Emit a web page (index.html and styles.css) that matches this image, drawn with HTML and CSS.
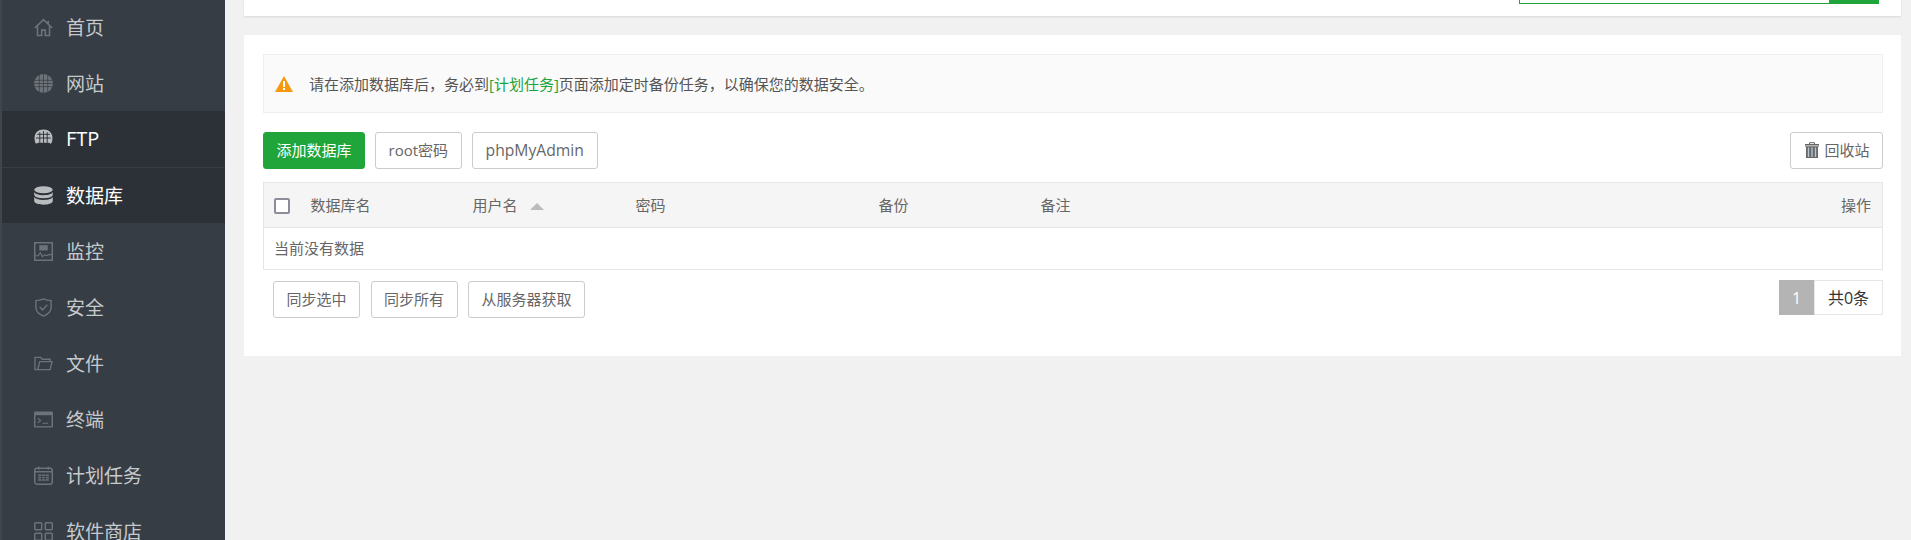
FILE: index.html
```html
<!DOCTYPE html>
<html lang="zh-CN">
<head>
    <meta charset="UTF-8">
    <title>数据库管理</title>
    <link rel="stylesheet" href="styles.css">
</head>
<body>
    <!-- 侧边栏 -->
    <aside class="sidebar">
        <ul class="menu">
            <li class="menu-item">
                <svg class="menu-icon" viewBox="0 0 18 18"><path d="M.8 9.500 9 1.500l8.200 8M13.500 2.500v3M3.300 7.500V16.500h4v-5h3.400v5h4V7.500" fill="none" stroke="currentColor" stroke-width="1.500"/></svg>
                <span>首页</span>
            </li>
            <li class="menu-item">
                <svg class="menu-icon" viewBox="0 0 18 18"><circle cx="9" cy="9" r="9" fill="currentColor"/><path d="M0 6h18M0 9h18M0 12h18M5 0v18M9 0v18M13 0v18" stroke="#363d44" stroke-width=".7"/></svg>
                <span>网站</span>
            </li>
            <li class="menu-item active">
                <svg class="menu-icon icon-ftp" viewBox="0 0 18 18"><path d="M9 1.500c5 0 8.500 3 8.500 8 0 2.500-.5 4.500-1.500 5.500l-2-1H4l-2 1C1 14 .5 12 .5 9.500c0-5 3.500-8 8.500-8z" fill="currentColor"/><path d="M3 6h12M2 9.500h14M5.500 4v10M9 3v11M12.500 4v10" stroke="#2c3138" stroke-width=".9"/></svg>
                <span class="latin">FTP</span>
            </li>
            <li class="menu-item active">
                <svg class="menu-icon" viewBox="0 0 18 18"><ellipse cx="9" cy="3.500" rx="8.800" ry="3.300" fill="currentColor"/><path d="M.2 5.700c1 2 3.800 3 8.800 3s7.800-1 8.800-3v2.800c-1 2-3.800 3-8.800 3s-7.800-1-8.800-3zM.2 10.200c1 2 3.800 3 8.800 3s7.800-1 8.800-3v4.300c-.7 2-3.800 3.200-8.800 3.200S.9 16.500.2 14.500z" fill="currentColor"/></svg>
                <span>数据库</span>
            </li>
            <li class="menu-item">
                <svg class="menu-icon" viewBox="0 0 18 18"><path d="M.7.700h16.600v16.600H.7z" fill="none" stroke="currentColor" stroke-width="1.400"/><path d="M5 3h8v5H5z" fill="currentColor"/><path d="M1 13h3l2-3 2 4 2-2 2 1 2-1h3" fill="none" stroke="currentColor" stroke-width="1.100"/></svg>
                <span>监控</span>
            </li>
            <li class="menu-item">
                <svg class="menu-icon" viewBox="0 0 18 20"><path d="M9 1c2.500 1.200 5 1.700 8 1.800V10c0 4-3 7-8 9-5-2-8-5-8-9V2.800C4 2.700 6.500 2.200 9 1z" fill="none" stroke="currentColor" stroke-width="1.500"/><path d="m5 9.500 3 3 5-5.500" fill="none" stroke="currentColor" stroke-width="1.500"/></svg>
                <span>安全</span>
            </li>
            <li class="menu-item">
                <svg class="menu-icon" viewBox="0 0 20 16"><path d="M4 14.500H1V1.500h6l1.500 2H17V6M4 14.500 6 6h13l-2 8.500z" fill="none" stroke="currentColor" stroke-width="1.400"/></svg>
                <span>文件</span>
            </li>
            <li class="menu-item">
                <svg class="menu-icon" viewBox="0 0 20 17"><rect width="20" height="17" rx="1.500" fill="currentColor"/><path d="M1.500 4h17v11.500h-17z" fill="#363d44"/><path d="m4 7 3 2.500L4 12M9 12.500h6" fill="none" stroke="currentColor" stroke-width="1.200"/></svg>
                <span>终端</span>
            </li>
            <li class="menu-item">
                <svg class="menu-icon" viewBox="0 0 18 18"><rect x=".7" y="2.200" width="16.600" height="15" rx="2" fill="none" stroke="currentColor" stroke-width="1.400"/><path d="M4.500.5v3M13.500.5v3M1 5.500h16" stroke="currentColor" stroke-width="1.300"/><path d="M4 8h10v6H4z" fill="currentColor"/><path d="M4 10h10M4 12h10M7.300 8v6M10.700 8v6" stroke="#363d44" stroke-width=".8"/></svg>
                <span>计划任务</span>
            </li>
            <li class="menu-item">
                <svg class="menu-icon" viewBox="0 0 18 18"><path d="M1.500.7h5a.8.8 0 0 1 .8.800v5a.8.8 0 0 1-.8.800h-5a.8.8 0 0 1-.8-.8v-5a.8.8 0 0 1 .8-.8zM11.500.7h5a.8.8 0 0 1 .8.800v5a.8.8 0 0 1-.8.800h-5a.8.8 0 0 1-.8-.8v-5a.8.8 0 0 1 .8-.8zM1.500 10.700h5a.8.8 0 0 1 .8.800v5a.8.8 0 0 1-.8.800h-5a.8.8 0 0 1-.8-.8v-5a.8.8 0 0 1 .8-.8zM11.500 10.700h5a.8.8 0 0 1 .8.800v5a.8.8 0 0 1-.8.800h-5a.8.8 0 0 1-.8-.8v-5a.8.8 0 0 1 .8-.8z" fill="none" stroke="currentColor" stroke-width="1.400"/></svg>
                <span>软件商店</span>
            </li>
        </ul>
    </aside>

    <main class="main">
        <!-- 顶部搜索条，只露出底边 -->
        <div class="top-card">
            <div class="search">
                <div class="search-input"></div>
                <div class="search-btn"></div>
            </div>
        </div>

        <section class="card">
            <div class="alert">
                <svg class="alert-icon" viewBox="0 0 18 16"><path d="M9 0 18 16H0z" fill="#f7980f"/><path d="M8 5h2v6H8zM8 12h2v2H8z" fill="#fff"/></svg>
                <span>请在添加数据库后，务必到<a class="link">[计划任务]</a>页面添加定时备份任务，以确保您的数据安全。</span>
            </div>

            <div class="toolbar">
                <button class="btn btn-green">添加数据库</button>
                <button class="btn">root密码</button>
                <button class="btn btn-latin">phpMyAdmin</button>
                <button class="btn btn-recycle">
                    <svg class="trash-icon" viewBox="0 0 14 16"><path d="M4.500 2V.7h5V2M0 2.500h14V4H0z" fill="none" stroke="#666" stroke-width="1"/><path d="M1 4.500h12V16H1z" fill="#666"/><path d="M3.500 5.500V15M7 5.500V15M10.500 5.500V15" stroke="#b8c4d0" stroke-width="1.400"/></svg>
                    回收站
                </button>
            </div>

            <table class="table">
                <colgroup>
                    <col class="col-check">
                    <col class="col-name">
                    <col class="col-user">
                    <col class="col-pass">
                    <col class="col-backup">
                    <col>
                    <col class="col-action">
                </colgroup>
                <thead>
                    <tr>
                        <th class="th-check"><span class="checkbox"></span></th>
                        <th>数据库名</th>
                        <th>用户名<span class="sort-up"></span></th>
                        <th>密码</th>
                        <th>备份</th>
                        <th>备注</th>
                        <th class="right">操作</th>
                    </tr>
                </thead>
                <tbody>
                    <tr>
                        <td colspan="7">当前没有数据</td>
                    </tr>
                </tbody>
            </table>

            <div class="table-foot">
                <div class="foot-btns">
                    <button class="btn">同步选中</button>
                    <button class="btn">同步所有</button>
                    <button class="btn">从服务器获取</button>
                </div>
                <div class="pager">
                    <span class="page-num">1</span>
                    <span class="page-total">共0条</span>
                </div>
            </div>
        </section>
    </main>
</body>
</html>
```

FILE: styles.css
```css
* {
    box-sizing: border-box;
}
body {
    margin: 0;
    height: 100vh;
    display: flex;
    overflow: hidden;
    background: #f1f1f1;
    font-family: "Open Sans", "Noto Sans CJK SC", sans-serif;
    font-size: 15px;
    color: #666;
}

/* 侧边栏 */
.sidebar {
    width: 225px;
    flex-shrink: 0;
    background: #363d44;
    border-left: 2px solid #42464a;
    overflow: hidden;
}
.menu {
    list-style: none;
    margin: -1px 0 0 -2px;
    padding: 0;
}
.menu-item {
    height: 56px;
    padding-left: 32px;
    display: flex;
    align-items: center;
    gap: 13px;
    border-left: 2px solid transparent;
    font-size: 19px;
    color: #c6cacd;
}
.menu-item span {
    padding-bottom: 1px;
}
.menu-item .latin {
    font-size: 20px;
}
.menu-item.active {
    background: #2c3138;
    border-left-color: #20a53a;
    color: #fff;
}
.menu-item.active + .menu-item.active {
    border-top: 1px solid #363d44;
}
.menu-icon {
    width: 19px;
    height: 19px;
    color: #6d7378;
}
.menu-icon.icon-ftp {
    margin-bottom: 4px;
}
.active .menu-icon {
    color: #b9bcbf;
}

/* 主区域 */
.main {
    flex: 1;
    min-width: 0;
    padding: 0 10px 0 19px;
}
.top-card {
    height: 16px;
    padding: 0 22px 12px 0;
    margin-bottom: 19px;
    display: flex;
    justify-content: flex-end;
    background: #fff;
    box-shadow: 0 1px 2px rgba(0,0,0,0.1);
}
.search {
    display: flex;
    width: 360px;
}
.search-input {
    flex: 1;
    border: 1px solid #20a53a;
    border-top: none;
}
.search-btn {
    width: 49px;
    background: #20a53a;
}
.card {
    height: 321px;
    padding: 19px 18px 0 19px;
    background: #fff;
}
.alert {
    height: 59px;
    padding-left: 11px;
    display: flex;
    align-items: center;
    gap: 16px;
    background: #fafafa;
    border: 1px solid #eee;
    font-size: 15px;
    color: #555;
}
.alert-icon {
    width: 18px;
    height: 16px;
}
.link {
    color: #20a53a;
}

/* 按钮 */
.toolbar {
    margin: 19px 0 13px;
    display: flex;
    gap: 10px;
}
.btn {
    height: 37px;
    padding: 0 12.500px 2px;
    background: #fff;
    border: 1px solid #ccc;
    border-radius: 3px;
    font: inherit;
    color: #666;
}
.btn-latin {
    padding: 0 13px 2px;
    font-size: 15.700px;
}
.btn-green {
    background: #20a53a;
    border-color: #20a53a;
    color: #fff;
}
.btn-recycle {
    margin-left: auto;
    padding-left: 14px;
    display: flex;
    align-items: center;
    gap: 5px;
}
.trash-icon {
    width: 14px;
    height: 16px;
}

/* 表格 */
.table {
    width: 100%;
    table-layout: fixed;
    border-collapse: collapse;
    border: 1px solid #e6e6e6;
    background: #fff;
}
.col-check {
    width: 36px;
}
.col-name {
    width: 162px;
}
.col-user {
    width: 163px;
}
.col-pass {
    width: 243px;
}
.col-backup {
    width: 162px;
}
.col-action {
    width: 120px;
}
.table th {
    height: 45px;
    padding: 0 11px 2px;
    background: #f5f5f5;
    border-bottom: 1px solid #e6e6e6;
    font-weight: normal;
    text-align: left;
}
.table th.th-check {
    padding: 2px 0 0 10px;
}
.table th.right {
    text-align: right;
}
.table td {
    height: 42px;
    padding: 0 10px 2px;
}
.checkbox {
    display: block;
    width: 16px;
    height: 16px;
    background: #fff;
    border: 2px solid #8e8b9a;
    border-radius: 2px;
}
.sort-up {
    display: inline-block;
    margin-left: 12px;
    vertical-align: middle;
    border-left: 7px solid transparent;
    border-right: 7px solid transparent;
    border-bottom: 7px solid #bbb;
}

/* 表格底部 */
.table-foot {
    margin-top: 10px;
    display: flex;
    justify-content: space-between;
}
.foot-btns {
    padding: 1px 0 0 10px;
    display: flex;
    gap: 10.500px;
}
.pager {
    height: 35px;
    display: flex;
}
.page-num {
    width: 35px;
    display: flex;
    align-items: center;
    justify-content: center;
    background: #b4b4b4;
    font-size: 16px;
    color: #fff;
}
.page-total {
    width: 69px;
    display: flex;
    align-items: center;
    justify-content: center;
    padding-bottom: 2px;
    border: 1px solid #e6e6e6;
    font-size: 16px;
    color: #333;
}
```
